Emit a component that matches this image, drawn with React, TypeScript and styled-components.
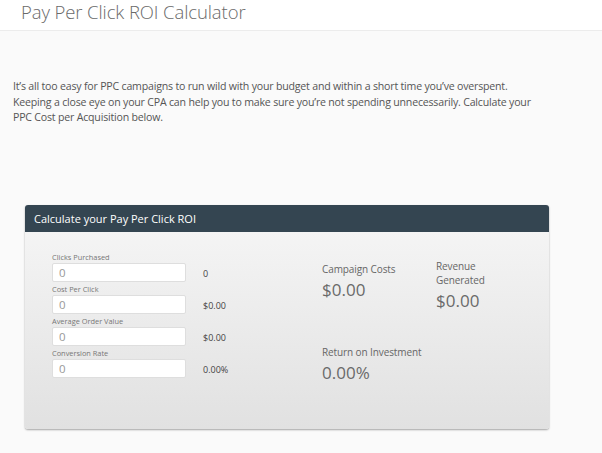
import React from "react";
import styled, { createGlobalStyle } from "styled-components";

const Global = createGlobalStyle`
  html, body { margin: 0; padding: 0; background: #fafafa; }
  body { font-family: "Open Sans", "Liberation Sans", Arial, sans-serif; }
  * { box-sizing: border-box; }
`;

const Page = styled.div`
  width: 602px;
  height: 453px;
  overflow: hidden;
  background: #fafafa;
`;

const TopBar = styled.header`
  height: 31px;
  background: #ffffff;
  border-bottom: 1px solid #ececec;
  padding-left: 21px;
  display: flex;
  align-items: flex-start;
`;

const Title = styled.h1`
  margin: 0;
  font-size: 18.5px;
  font-weight: 300;
  color: #6a6a6a;
  line-height: 23px;
  letter-spacing: -0.1px;
`;

const Intro = styled.p`
  margin: 48px 0 0 13px;
  width: 535px;
  font-size: 10.6px;
  line-height: 15.6px;
  letter-spacing: -0.2px;
  color: #555;
`;

const Panel = styled.section`
  margin: 79px 0 0 25px;
  width: 524px;
  border-radius: 3px;
  overflow: hidden;
  box-shadow: 0 1px 2px rgba(0, 0, 0, 0.35);
`;

const PanelHead = styled.div`
  height: 27px;
  background: #344551;
  color: #fff;
  font-size: 11px;
  padding-left: 9px;
  display: flex;
  align-items: center;
`;

const PanelBody = styled.div`
  height: 197px;
  background: linear-gradient(#f4f4f4, #e1e1e1);
  padding: 20px 0 0 27px;
  display: flex;
`;

const Inputs = styled.div`
  width: 270px;
  display: flex;
  flex-direction: column;
`;

const Field = styled.div`
  display: flex;
  flex-direction: column;
  height: 32px;
`;

const Label = styled.label`
  font-size: 7.4px;
  color: #777;
  line-height: 11px;
  height: 11px;
`;

const Row = styled.div`
  display: flex;
  align-items: center;
`;

const Input = styled.div`
  width: 134px;
  height: 19px;
  background: #fff;
  border: 1px solid #dedede;
  border-radius: 2px;
  padding-left: 6px;
  font-size: 11.5px;
  color: #999;
  display: flex;
  align-items: center;
`;

const Computed = styled.span`
  margin-left: 17px;
  margin-top: 2px;
  font-size: 9px;
  color: #444;
`;

const Results = styled.div`
  display: grid;
  grid-template-columns: 114px 80px;
  grid-template-rows: 88px auto;
  padding-top: 5px;
`;

const Stat = styled.div<{ $top?: number }>`
  padding-top: ${(p) => p.$top ?? 0}px;
`;

const StatLabel = styled.div<{ $w?: number }>`
  font-size: 10px;
  letter-spacing: -0.1px;
  color: #666;
  line-height: 14px;
  width: ${(p) => p.$w ?? 110}px;
`;

const StatValue = styled.div`
  font-size: 17px;
  color: #6a6a6a;
  line-height: 24px;
  margin-top: 2px;
`;

const fields = [
  { label: "Clicks Purchased", out: "0" },
  { label: "Cost Per Click", out: "$0.00" },
  { label: "Average Order Value", out: "$0.00" },
  { label: "Conversion Rate", out: "0.00%" },
];

export default function App() {
  return (
    <Page>
      <Global />
      <TopBar>
        <Title>Pay Per Click ROI Calculator</Title>
      </TopBar>
      <Intro>
        It’s all too easy for PPC campaigns to run wild with your budget and within a short time you’ve overspent.
        Keeping a close eye on your CPA can help you to make sure you’re not spending unnecessarily. Calculate your
        PPC Cost per Acquisition below.
      </Intro>
      <Panel>
        <PanelHead>Calculate your Pay Per Click ROI</PanelHead>
        <PanelBody>
          <Inputs>
            {fields.map((f) => (
              <Field key={f.label}>
                <Label>{f.label}</Label>
                <Row>
                  <Input>0</Input>
                  <Computed>{f.out}</Computed>
                </Row>
              </Field>
            ))}
          </Inputs>
          <Results>
            <Stat $top={5}>
              <StatLabel>Campaign Costs</StatLabel>
              <StatValue>$0.00</StatValue>
            </Stat>
            <Stat $top={2}>
              <StatLabel $w={62}>Revenue Generated</StatLabel>
              <StatValue>$0.00</StatValue>
            </Stat>
            <Stat>
              <StatLabel>Return on Investment</StatLabel>
              <StatValue>0.00%</StatValue>
            </Stat>
          </Results>
        </PanelBody>
      </Panel>
    </Page>
  );
}
